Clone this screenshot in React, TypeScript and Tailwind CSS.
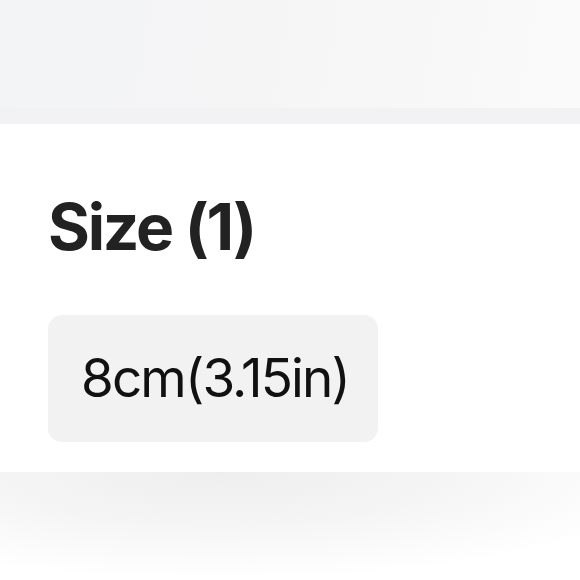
export default function App() {
  return (
    <main className="h-[580px] w-[580px] overflow-hidden bg-white font-['Inter',sans-serif]">
      <div className="h-[108px] bg-[linear-gradient(100deg,#f3f4f6_0%,#f5f5f6_45%,#fafafb_100%)]" />
      <div className="h-4 bg-[#f2f2f5]" />

      <section className="bg-white px-12 pb-[30px] pt-[71px]">
        <h2 className="text-[64px] font-bold leading-none tracking-[-0.035em] text-[#222222]">
          Size (1)
        </h2>

        <div className="mt-[56px] flex h-[127px] w-[330px] items-center rounded-[14px] bg-[#f2f2f2] px-[33px]">
          <span className="text-[53px] leading-none tracking-[-0.035em] text-[#111111]">
            8cm(3.15in)
          </span>
        </div>
      </section>

      <div className="h-[108px] bg-[radial-gradient(ellipse_80%_100%_at_38%_0%,#eeeeee_0%,#f5f5f5_50%,#ffffff_100%)]" />
    </main>
  );
}
